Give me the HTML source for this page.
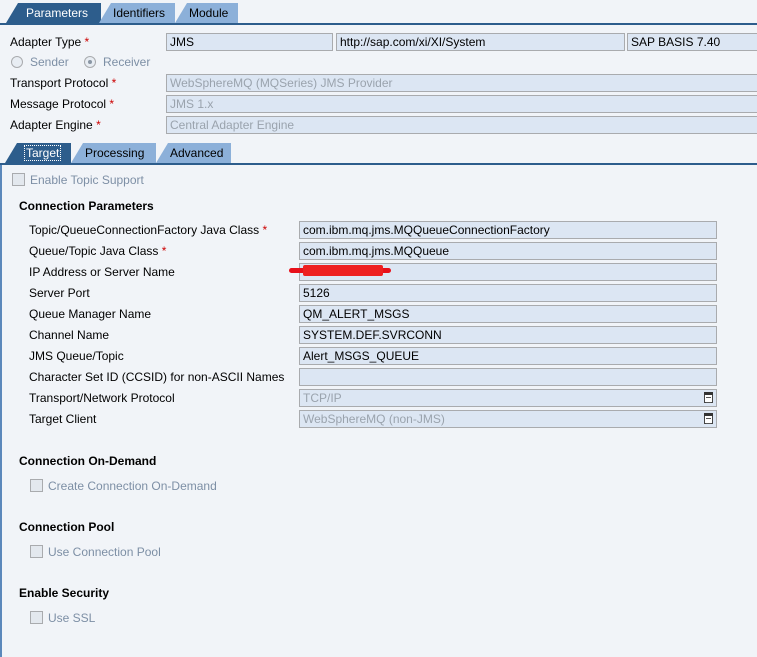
<!DOCTYPE html>
<html><head><meta charset="utf-8"><style>
*{margin:0;padding:0;box-sizing:border-box}
body{width:757px;height:657px;overflow:hidden;background:#f1f4f8;font-family:"Liberation Sans",sans-serif;font-size:12px;color:#000;position:relative}
.a{position:absolute;white-space:nowrap}
.tab{position:absolute;height:20px;line-height:20px;padding-left:14px;color:#000;background:#8cb0d9;clip-path:polygon(12px 0,100% 0,100% 100%,0 100%)}
.tab.on{background:#2d5d8c;color:#fff;padding-left:20px}
.in{position:absolute;height:18px;background:#dce6f3;border:1px solid #a9abae;line-height:16px;padding-left:3px;white-space:nowrap;overflow:hidden}
.dis{color:#9aa3ad}
.st{color:#c00}
.lbl{position:absolute;white-space:nowrap;line-height:14px}
.b{font-weight:bold}
.cb{position:absolute;width:13px;height:13px;border:1px solid #a9abae;background:#e3e8ee}
.cl{position:absolute;color:#7d8fa5;white-space:nowrap;line-height:14px}
.dd{position:absolute;right:3px;top:2px;width:9px;height:11px;border:1px solid #444;background:#fff}
.dd:before{content:"";position:absolute;left:-1px;top:-1px;width:9px;height:3px;background:#333}
.dd:after{content:"";position:absolute;left:1px;top:4px;width:5px;height:4px;border-top:1px solid #555;border-bottom:1px solid #555}
</style></head><body>
<div class="tab on" style="left:6px;top:3px;width:95px">Parameters</div>
<div class="tab" style="left:99px;top:3px;width:76px">Identifiers</div>
<div class="tab" style="left:175px;top:3px;width:63px">Module</div>
<div class="a" style="left:0;top:23px;width:757px;height:2px;background:#2d5d8c"></div>

<div class="lbl" style="left:10px;top:35px">Adapter Type <span class="st">*</span></div>
<div class="in" style="left:166px;top:33px;width:167px">JMS</div>
<div class="in" style="left:336px;top:33px;width:289px">http://sap.com/xi/XI/System</div>
<div class="in" style="left:627px;top:33px;width:135px">SAP BASIS 7.40</div>

<div class="a" style="left:11px;top:56px;width:12px;height:12px;border-radius:50%;border:1px solid #a9abae;background:#e8edf3"></div>
<div class="cl" style="left:30px;top:55px">Sender</div>
<div class="a" style="left:84px;top:56px;width:12px;height:12px;border-radius:50%;border:1px solid #a9abae;background:#e8edf3"></div>
<div class="a" style="left:88px;top:60px;width:4px;height:4px;border-radius:50%;background:#8a96a4"></div>
<div class="cl" style="left:103px;top:55px">Receiver</div>

<div class="lbl" style="left:10px;top:76px">Transport Protocol <span class="st">*</span></div>
<div class="in dis" style="left:166px;top:74px;width:600px">WebSphereMQ (MQSeries) JMS Provider</div>
<div class="lbl" style="left:10px;top:97px">Message Protocol <span class="st">*</span></div>
<div class="in dis" style="left:166px;top:95px;width:600px">JMS 1.x</div>
<div class="lbl" style="left:10px;top:118px">Adapter Engine <span class="st">*</span></div>
<div class="in dis" style="left:166px;top:116px;width:600px">Central Adapter Engine</div>

<div class="tab on" style="left:5px;top:143px;width:66px"><span style="outline:1px dotted #fff;padding:0 1px">Target</span></div>
<div class="tab" style="left:71px;top:143px;width:85px">Processing</div>
<div class="tab" style="left:156px;top:143px;width:75px">Advanced</div>
<div class="a" style="left:0;top:163px;width:757px;height:2px;background:#2d5d8c"></div>
<div class="a" style="left:0;top:165px;width:2px;height:492px;background:#5b88bb"></div>

<div class="cb" style="left:12px;top:173px"></div>
<div class="cl" style="left:30px;top:173px">Enable Topic Support</div>

<div class="lbl b" style="left:19px;top:199px">Connection Parameters</div>

<div class="lbl" style="left:29px;top:223px">Topic/QueueConnectionFactory Java Class <span class="st">*</span></div>
<div class="in" style="left:299px;top:221px;width:418px">com.ibm.mq.jms.MQQueueConnectionFactory</div>
<div class="lbl" style="left:29px;top:244px">Queue/Topic Java Class <span class="st">*</span></div>
<div class="in" style="left:299px;top:242px;width:418px">com.ibm.mq.jms.MQQueue</div>
<div class="lbl" style="left:29px;top:265px">IP Address or Server Name</div>
<div class="in" style="left:299px;top:263px;width:418px"></div>
<div class="a" style="left:289px;top:268px;width:102px;height:5px;background:#e8101a;border-radius:3px"></div>
<div class="a" style="left:303px;top:265px;width:80px;height:11px;background:#ee2020;border-radius:2px"></div>
<div class="lbl" style="left:29px;top:286px">Server Port</div>
<div class="in" style="left:299px;top:284px;width:418px">5126</div>
<div class="lbl" style="left:29px;top:307px">Queue Manager Name</div>
<div class="in" style="left:299px;top:305px;width:418px">QM_ALERT_MSGS</div>
<div class="lbl" style="left:29px;top:328px">Channel Name</div>
<div class="in" style="left:299px;top:326px;width:418px">SYSTEM.DEF.SVRCONN</div>
<div class="lbl" style="left:29px;top:349px">JMS Queue/Topic</div>
<div class="in" style="left:299px;top:347px;width:418px">Alert_MSGS_QUEUE</div>
<div class="lbl" style="left:29px;top:370px">Character Set ID (CCSID) for non-ASCII Names</div>
<div class="in" style="left:299px;top:368px;width:418px"></div>
<div class="lbl" style="left:29px;top:391px">Transport/Network Protocol</div>
<div class="in dis" style="left:299px;top:389px;width:418px">TCP/IP<div class="dd"></div></div>
<div class="lbl" style="left:29px;top:412px">Target Client</div>
<div class="in dis" style="left:299px;top:410px;width:418px">WebSphereMQ (non-JMS)<div class="dd"></div></div>

<div class="lbl b" style="left:19px;top:454px">Connection On-Demand</div>
<div class="cb" style="left:30px;top:479px"></div>
<div class="cl" style="left:48px;top:479px">Create Connection On-Demand</div>
<div class="lbl b" style="left:19px;top:520px">Connection Pool</div>
<div class="cb" style="left:30px;top:545px"></div>
<div class="cl" style="left:48px;top:545px">Use Connection Pool</div>
<div class="lbl b" style="left:19px;top:586px">Enable Security</div>
<div class="cb" style="left:30px;top:611px"></div>
<div class="cl" style="left:48px;top:611px">Use SSL</div>
</body></html>
